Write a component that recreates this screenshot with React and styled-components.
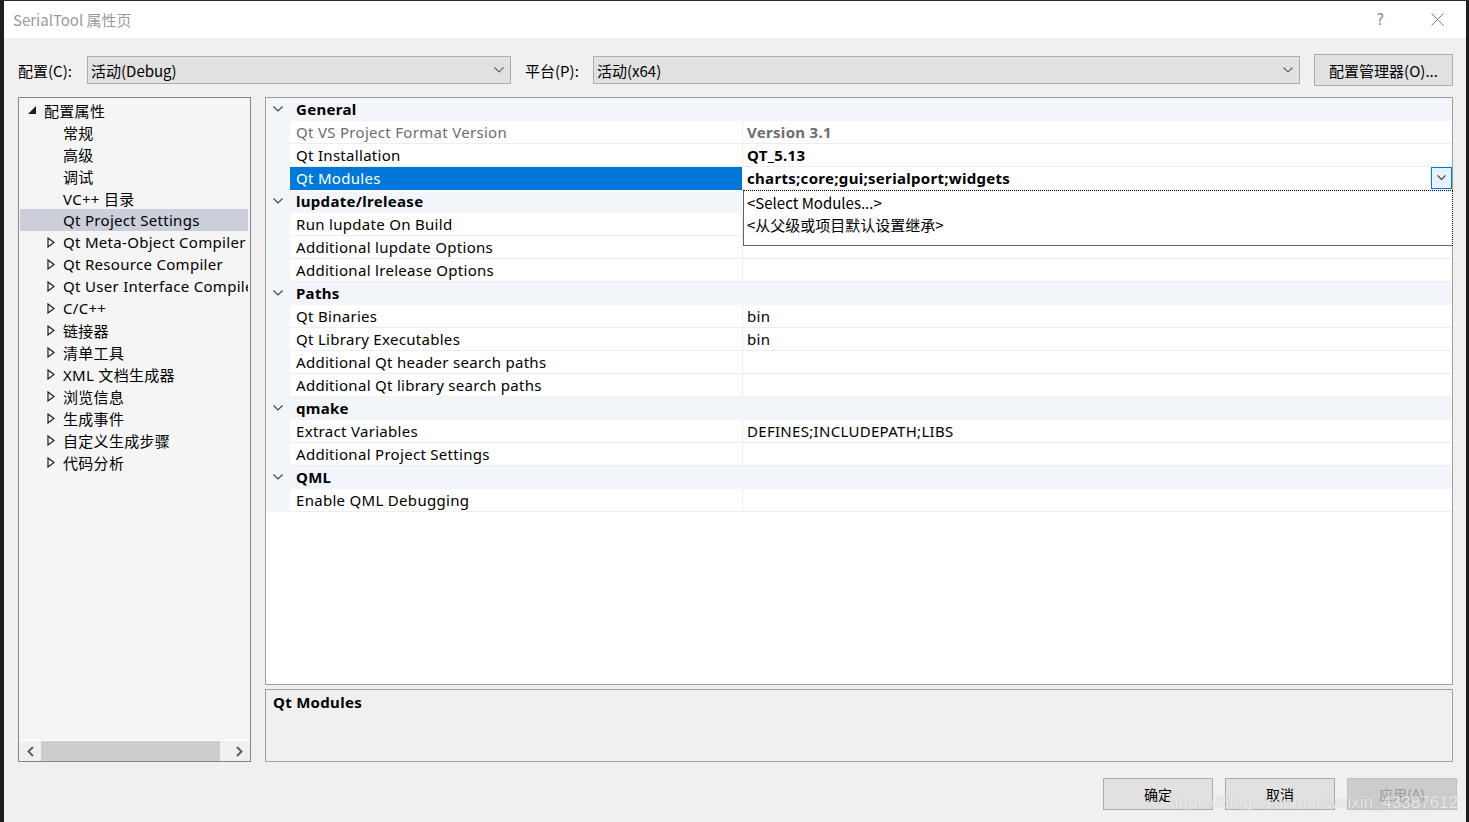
import React from 'react';
import styled, { createGlobalStyle } from 'styled-components';

const GlobalStyle = createGlobalStyle`
  html, body {
    margin     : 0;
    padding    : 0;
    background : #1e1e1e;
    overflow   : hidden;
  }
  body {
    font-family    : "Noto Sans", "Noto Sans CJK SC", sans-serif;
    font-size      : 15px;
    letter-spacing : 0.3px;
    color          : #000;
  }
`;

const colors = {
  face       : '#f0f0f0',
  border     : '#a0a0a0',
  category   : '#f2f5fa',
  line       : '#eeeeee',
  selected   : '#0078d7',
  treeSelect : '#cccedb',
  comboBg    : '#e1e1e1',
  comboLine  : '#adadad',
};

const Window = styled.div`
  position       : relative;
  margin-left    : 4px;
  width          : 1462px;
  height         : 822px;
  background     : ${colors.face};
  display        : flex;
  flex-direction : column;
  border-top     : 1px solid #2b2b2b;
  box-sizing     : border-box;
`;

const TitleBar = styled.div`
  height          : 37px;
  background      : #fff;
  display         : flex;
  align-items     : center;
  justify-content : space-between;
  padding-left    : 9px;
`;

const Title = styled.div`
  color          : #9a9a9a;
  font-size      : 15px;
  letter-spacing : 0;
  font-family    : "Noto Sans CJK SC", sans-serif;
`;

const TitleButtons = styled.div`
  display : flex;
  height  : 100%;
`;

const TitleButton = styled.div`
  width           : 57px;
  display         : flex;
  align-items     : center;
  justify-content : center;
  color           : #8a8a8a;
  font-size       : 15px;
  font-family     : "DejaVu Sans", sans-serif;
`;

const ConfigRow = styled.div`
  display        : flex;
  align-items    : center;
  height         : 32px;
  margin-top     : 16px;
  padding        : 0 13px 0 14px;
  font-family    : "Noto Sans CJK SC", sans-serif;
  font-size      : 15px;
  letter-spacing : 0;
`;

const Label = styled.span`
  width       : ${p => p.width}px;
  flex-shrink : 0;
  white-space : nowrap;
`;

const Combo = styled.div`
  width           : ${p => p.width}px;
  height          : 28px;
  box-sizing      : border-box;
  background      : ${colors.comboBg};
  border          : 1px solid ${colors.comboLine};
  display         : flex;
  align-items     : center;
  justify-content : space-between;
  padding         : 0 6px 0 3px;
  margin-right    : ${p => p.gap || 0}px;
`;

const ConfigButton = styled.div`
  margin-left     : auto;
  width           : 139px;
  height          : 32px;
  box-sizing      : border-box;
  background      : ${colors.comboBg};
  border          : 1px solid ${colors.comboLine};
  display         : flex;
  align-items     : center;
  justify-content : center;
`;

const Main = styled.div`
  display      : flex;
  gap          : 14px;
  margin-top   : 11px;
  padding-left : 14px;
`;

const TreePanel = styled.div`
  width          : 233px;
  height         : 665px;
  box-sizing     : border-box;
  border         : 1px solid #828790;
  background     : #f5f5f5;
  display        : flex;
  flex-direction : column;
  overflow       : hidden;
`;

const TreeList = styled.div`
  flex    : 1;
  padding : 1px 1px 0;
`;

const TreeRow = styled.div`
  height       : 22px;
  display      : flex;
  align-items  : center;
  white-space  : nowrap;
  overflow     : hidden;
  background   : ${p => (p.selected ? colors.treeSelect : 'transparent')};
  padding-left : ${p => p.indent}px;
  margin-right : 1px;
`;

const TreeArrow = styled.span`
  width           : 15px;
  flex-shrink     : 0;
  display         : inline-flex;
  justify-content : center;
  margin-right    : 5px;
`;

const HScroll = styled.div`
  height      : 20px;
  border-top  : 1px solid #fff;
  background  : ${colors.face};
  display     : flex;
  align-items : center;
`;

const ScrollArrow = styled.div`
  width           : 22px;
  height          : 100%;
  display         : flex;
  align-items     : center;
  justify-content : center;
`;

const ScrollTrack = styled.div`
  flex    : 1;
  height  : 100%;
  display : flex;
`;

const ScrollThumb = styled.div`
  width      : 179px;
  height     : 100%;
  background : #cdcdcd;
`;

const RightColumn = styled.div`
  width          : 1188px;
  display        : flex;
  flex-direction : column;
  gap            : 4px;
`;

const Grid = styled.div`
  position   : relative;
  height     : 588px;
  box-sizing : border-box;
  border     : 1px solid ${colors.border};
  background : #fff;
`;

const CategoryRow = styled.div`
  height        : 22px;
  display       : flex;
  align-items   : center;
  background    : ${colors.category};
  font-weight   : 700;
  border-bottom : 1px solid ${colors.category};
`;

const Gutter = styled.div`
  width           : 24px;
  align-self      : stretch;
  display         : flex;
  align-items     : center;
  justify-content : center;
  background      : ${colors.category};
  flex-shrink     : 0;
`;

const CategoryName = styled.div`
  padding-left : 6px;
`;

const PropRow = styled.div`
  height  : 23px;
  display : flex;
`;

const NameCell = styled.div`
  width         : 453px;
  box-sizing    : border-box;
  padding-left  : 6px;
  display       : flex;
  align-items   : center;
  border-right  : 1px solid ${colors.line};
  border-bottom : 1px solid ${p => (p.selected ? colors.selected : colors.line)};
  background    : ${p => (p.selected ? colors.selected : '#fff')};
  color         : ${p => (p.selected ? '#fff' : p.readonly ? '#6d6d6d' : '#000')};
  white-space   : nowrap;
`;

const ValueCell = styled.div`
  position      : relative;
  flex          : 1;
  padding-left  : 4px;
  display       : flex;
  align-items   : center;
  border-bottom : 1px solid ${colors.line};
  font-weight   : ${p => (p.bold ? 700 : 400)};
  color         : ${p => (p.readonly ? '#6d6d6d' : '#000')};
  white-space   : nowrap;
`;

const DropButton = styled.div`
  position        : absolute;
  right           : 0;
  top             : 0;
  width           : 21px;
  height          : 22px;
  box-sizing      : border-box;
  border          : 1px solid ${colors.selected};
  background      : #e5f1fb;
  display         : flex;
  align-items     : center;
  justify-content : center;
`;

const DropList = styled.div`
  position       : absolute;
  left           : 477px;
  top            : 92px;
  width          : 710px;
  height         : 56px;
  box-sizing     : border-box;
  background     : #fff;
  border         : 1px solid #646464;
  border-top     : 1px dotted #000;
  border-right   : 1px dotted #000;
  font-family    : "Noto Sans CJK SC", sans-serif;
  font-size      : 15px;
  letter-spacing : 0;
  padding-top    : 1px;
  z-index        : 2;
`;

const DropItem = styled.div`
  height       : 22px;
  line-height  : 22px;
  padding-left : 3px;
`;

const Description = styled.div`
  height      : 73px;
  box-sizing  : border-box;
  border      : 1px solid ${colors.border};
  padding     : 2px 7px;
  font-weight : 700;
`;

const Footer = styled.div`
  display         : flex;
  justify-content : flex-end;
  gap             : 12px;
  margin-top      : 16px;
  padding-right   : 9px;
  font-family     : "Noto Sans CJK SC", sans-serif;
  font-size       : 14px;
  letter-spacing  : 0;
`;

const FooterButton = styled.div`
  width           : 110px;
  height          : 32px;
  box-sizing      : border-box;
  border          : 1px solid ${p => (p.disabled ? '#bfbfbf' : colors.comboLine)};
  background      : ${p => (p.disabled ? '#cccccc' : colors.comboBg)};
  color           : ${p => (p.disabled ? '#9a9a9a' : '#000')};
  display         : flex;
  align-items     : center;
  justify-content : center;
`;

const Watermark = styled.div`
  position       : absolute;
  right          : 8px;
  bottom         : 9px;
  font-family    : "Liberation Sans", Arial, sans-serif;
  font-size      : 17px;
  letter-spacing : 0;
  color          : rgba(255, 255, 255, 0.75);
  text-shadow    : 0 0 1px rgba(120, 120, 120, 0.5);
  pointer-events : none;
`;

const Chevron = ({ size = 10, color = '#555' }) => (
  <svg width={size} height={size * 0.6} viewBox="0 0 10 6">
    <path d="M0.5 0.5 L5 5 L9.5 0.5" fill="none" stroke={color} strokeWidth="1.2" />
  </svg>
);

const CloseIcon = () => (
  <svg width="13" height="13" viewBox="0 0 13 13">
    <path d="M0.5 0.5 L12.5 12.5 M12.5 0.5 L0.5 12.5" stroke="#808080" strokeWidth="1" fill="none" />
  </svg>
);

const CollapsedArrow = () => (
  <svg width="8" height="11" viewBox="0 0 8 11">
    <path d="M1 1 L7 5.5 L1 10 Z" fill="none" stroke="#1e1e1e" strokeWidth="1.2" />
  </svg>
);

const ExpandedArrow = () => (
  <svg width="8" height="8" viewBox="0 0 8 8">
    <path d="M8 0 L8 8 L0 8 Z" fill="#1e1e1e" />
  </svg>
);

const ScrollChevron = ({ dir }) => (
  <svg width="7" height="11" viewBox="0 0 7 11">
    <path
      d={dir === 'left' ? 'M6 1 L1.5 5.5 L6 10' : 'M1 1 L5.5 5.5 L1 10'}
      fill="none"
      stroke="#606060"
      strokeWidth="2"
    />
  </svg>
);

const tree = [
  { label: '配置属性', level: 0, state: 'open' },
  { label: '常规', level: 1 },
  { label: '高级', level: 1 },
  { label: '调试', level: 1 },
  { label: 'VC++ 目录', level: 1 },
  { label: 'Qt Project Settings', level: 1, selected: true },
  { label: 'Qt Meta-Object Compiler', level: 1, state: 'closed' },
  { label: 'Qt Resource Compiler', level: 1, state: 'closed' },
  { label: 'Qt User Interface Compiler', level: 1, state: 'closed' },
  { label: 'C/C++', level: 1, state: 'closed' },
  { label: '链接器', level: 1, state: 'closed' },
  { label: '清单工具', level: 1, state: 'closed' },
  { label: 'XML 文档生成器', level: 1, state: 'closed' },
  { label: '浏览信息', level: 1, state: 'closed' },
  { label: '生成事件', level: 1, state: 'closed' },
  { label: '自定义生成步骤', level: 1, state: 'closed' },
  { label: '代码分析', level: 1, state: 'closed' },
];

const categories = [
  {
    name: 'General',
    props: [
      { name: 'Qt VS Project Format Version', value: 'Version 3.1', bold: true, readonly: true },
      { name: 'Qt Installation', value: 'QT_5.13', bold: true },
      { name: 'Qt Modules', value: 'charts;core;gui;serialport;widgets', bold: true, selected: true },
    ],
  },
  {
    name: 'lupdate/lrelease',
    props: [
      { name: 'Run lupdate On Build', value: '' },
      { name: 'Additional lupdate Options', value: '' },
      { name: 'Additional lrelease Options', value: '' },
    ],
  },
  {
    name: 'Paths',
    props: [
      { name: 'Qt Binaries', value: 'bin' },
      { name: 'Qt Library Executables', value: 'bin' },
      { name: 'Additional Qt header search paths', value: '' },
      { name: 'Additional Qt library search paths', value: '' },
    ],
  },
  {
    name: 'qmake',
    props: [
      { name: 'Extract Variables', value: 'DEFINES;INCLUDEPATH;LIBS' },
      { name: 'Additional Project Settings', value: '' },
    ],
  },
  {
    name: 'QML',
    props: [{ name: 'Enable QML Debugging', value: '' }],
  },
];

const Tree = () => (
  <TreePanel>
    <TreeList>
      {tree.map(item => (
        <TreeRow key={item.label} indent={item.level === 0 ? 4 : 23} selected={item.selected}>
          <TreeArrow>
            {item.state === 'open' && <ExpandedArrow />}
            {item.state === 'closed' && <CollapsedArrow />}
          </TreeArrow>
          {item.label}
        </TreeRow>
      ))}
    </TreeList>
    <HScroll>
      <ScrollArrow><ScrollChevron dir="left" /></ScrollArrow>
      <ScrollTrack><ScrollThumb /></ScrollTrack>
      <ScrollArrow><ScrollChevron dir="right" /></ScrollArrow>
    </HScroll>
  </TreePanel>
);

const PropertyGrid = () => (
  <Grid>
    {categories.map(cat => (
      <React.Fragment key={cat.name}>
        <CategoryRow>
          <Gutter><Chevron color="#444" /></Gutter>
          <CategoryName>{cat.name}</CategoryName>
        </CategoryRow>
        {cat.props.map(prop => (
          <PropRow key={prop.name}>
            <Gutter />
            <NameCell selected={prop.selected} readonly={prop.readonly}>{prop.name}</NameCell>
            <ValueCell bold={prop.bold} readonly={prop.readonly}>
              {prop.value}
              {prop.selected && (
                <DropButton><Chevron size={9} color="#333" /></DropButton>
              )}
            </ValueCell>
          </PropRow>
        ))}
      </React.Fragment>
    ))}
    <DropList>
      <DropItem>&lt;Select Modules...&gt;</DropItem>
      <DropItem>&lt;从父级或项目默认设置继承&gt;</DropItem>
    </DropList>
  </Grid>
);

export default function App() {
  return (
    <>
      <GlobalStyle />
      <Window>
        <TitleBar>
          <Title>SerialTool 属性页</Title>
          <TitleButtons>
            <TitleButton>?</TitleButton>
            <TitleButton><CloseIcon /></TitleButton>
          </TitleButtons>
        </TitleBar>

        <ConfigRow>
          <Label width={69}>配置(C):</Label>
          <Combo width={424} gap={14}>
            <span>活动(Debug)</span>
            <Chevron size={10} color="#666" />
          </Combo>
          <Label width={68}>平台(P):</Label>
          <Combo width={707}>
            <span>活动(x64)</span>
            <Chevron size={10} color="#666" />
          </Combo>
          <ConfigButton>配置管理器(O)...</ConfigButton>
        </ConfigRow>

        <Main>
          <Tree />
          <RightColumn>
            <PropertyGrid />
            <Description>Qt Modules</Description>
          </RightColumn>
        </Main>

        <Footer>
          <FooterButton>确定</FooterButton>
          <FooterButton>取消</FooterButton>
          <FooterButton disabled>应用(A)</FooterButton>
        </Footer>

        <Watermark>https://blog.csdn.net/weixin_43387612</Watermark>
      </Window>
    </>
  );
}
